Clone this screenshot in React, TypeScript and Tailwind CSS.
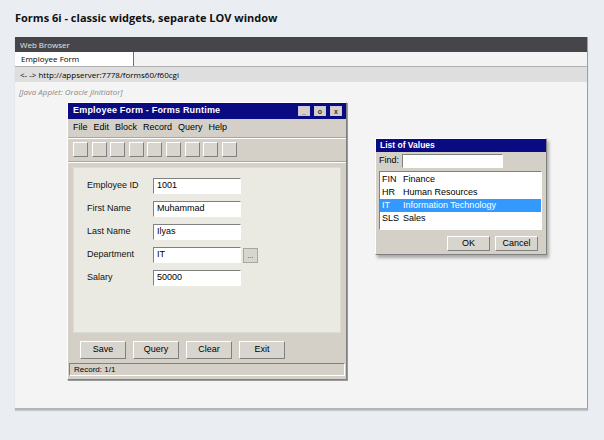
import React from "react";

const ui = { fontFamily: '"Liberation Sans", Arial, sans-serif' };
const seg = { fontFamily: '"Open Sans", "Noto Sans", sans-serif' };

const bevel =
  "border border-t-white border-l-white border-r-[#808080] border-b-[#808080]";
const inset =
  "border border-t-[#808080] border-l-[#808080] border-r-white border-b-white";

const fields = [
  { label: "Employee ID", value: "1001" },
  { label: "First Name", value: "Muhammad" },
  { label: "Last Name", value: "Ilyas" },
  { label: "Department", value: "IT", lov: true },
  { label: "Salary", value: "50000" },
];

const lovRows = [
  { code: "FIN", name: "Finance" },
  { code: "HR", name: "Human Resources" },
  { code: "IT", name: "Information Technology", selected: true },
  { code: "SLS", name: "Sales" },
];

function TitleButton({ glyph }: { glyph: string }) {
  return (
    <div className="w-[12px] h-[10px] bg-[#d4d0c8] border border-[#c8c8d8] flex items-center justify-center text-[7px] font-bold leading-none text-[#333]">
      {glyph}
    </div>
  );
}

function FormsWindow() {
  return (
    <div
      className={`w-[280px] bg-[#d4d0c8] ${bevel} shadow-[1px_1px_0_#9a9a9a] flex flex-col`}
      style={ui}
    >
      <div className="h-[16px] bg-[#0a0a82] flex items-center justify-between pl-[5px] pr-[4px]">
        <span className="text-white text-[9px] font-bold tracking-[0.2px]">
          Employee Form - Forms Runtime
        </span>
        <div className="flex gap-[4px]">
          <TitleButton glyph="_" />
          <TitleButton glyph="o" />
          <TitleButton glyph="x" />
        </div>
      </div>
      <div className="h-[18px] flex items-center gap-[6px] pl-[5px] text-[9px] text-black">
        <span>File</span>
        <span>Edit</span>
        <span>Block</span>
        <span>Record</span>
        <span>Query</span>
        <span>Help</span>
      </div>
      <div className="border-t border-t-[#a8a6a0] border-b border-b-white" />
      <div className="flex gap-[3.6px] pl-[5px] pt-[3px] pb-[4px]">
        {Array.from({ length: 9 }).map((_, i) => (
          <div key={i} className={`w-[15px] h-[15px] bg-[#d8d5ce] ${bevel}`} />
        ))}
      </div>
      <div className="border-t border-t-[#a8a6a0] border-b border-b-white" />
      <div className="mx-[5px] mt-[4px] h-[166px] bg-[#ebeae2] border border-[#dcdad2] pt-[10px] pl-[13px] flex flex-col gap-[7px]">
        {fields.map((f) => (
          <div key={f.label} className="flex items-center h-[16px]">
            <span className="w-[66px] text-[9px] text-[#111]">{f.label}</span>
            <div
              className={`w-[88px] h-[16px] bg-white ${inset} flex items-center pl-[3px] text-[9px] text-black`}
            >
              {f.value}
            </div>
            {f.lov && (
              <div className="ml-[2px] w-[15px] h-[15px] bg-[#d8d5ce] border border-[#a9a7a0] flex items-center justify-center text-[7px] leading-none text-[#333]">
                ...
              </div>
            )}
          </div>
        ))}
      </div>
      <div className="flex gap-[7px] pl-[12px] pt-[8px] pb-[4px]">
        {["Save", "Query", "Clear", "Exit"].map((b) => (
          <div
            key={b}
            className={`w-[46px] h-[18px] bg-[#d8d5ce] ${bevel} flex items-center justify-center text-[9px] text-black`}
          >
            {b}
          </div>
        ))}
      </div>
      <div
        className={`mx-[1px] mb-[3px] h-[13px] ${inset} flex items-center pl-[4px] text-[8px] text-black`}
      >
        Record: 1/1
      </div>
    </div>
  );
}

function LovWindow() {
  return (
    <div
      className={`mt-[36px] w-[172px] h-[117px] bg-[#d4d0c8] ${bevel} shadow-[2px_3px_3px_rgba(0,0,0,0.3)] flex flex-col`}
      style={ui}
    >
      <div className="h-[13px] bg-[#0a0a82] flex items-center pl-[4px]">
        <span className="text-white text-[8.5px] font-bold">List of Values</span>
      </div>
      <div className="flex items-center h-[17px] pl-[3px] gap-[3px]">
        <span className="text-[9px] text-black">Find:</span>
        <div className={`w-[101px] h-[14px] bg-white ${inset}`} />
      </div>
      <div
        className={`mt-[2px] ml-[3px] w-[163px] h-[59px] bg-white ${inset} pt-[1px] flex flex-col`}
      >
        {lovRows.map((r) => (
          <div
            key={r.code}
            className={`h-[13px] flex items-center pl-[2px] text-[9px] ${
              r.selected ? "bg-[#3399ff] text-white" : "text-black"
            }`}
          >
            <span className="w-[21px]">{r.code}</span>
            <span>{r.name}</span>
          </div>
        ))}
      </div>
      <div className="flex justify-end gap-[5px] pr-[8px] pt-[6px]">
        {["OK", "Cancel"].map((b) => (
          <div
            key={b}
            className={`w-[43px] h-[15px] bg-[#d8d5ce] ${bevel} flex items-center justify-center text-[9px] text-black`}
          >
            {b}
          </div>
        ))}
      </div>
    </div>
  );
}

export default function App() {
  return (
    <div className="w-[604px] h-[440px] bg-[#eaeef2] pt-[9px] pl-[15px]" style={seg}>
      <h1 className="text-[11px] font-bold text-[#111] leading-[18px]">
        Forms 6i - classic widgets, separate LOV window
      </h1>
      <div className="mt-[10px] w-[573px] bg-[#f4f4f4] border-r border-r-[#a0a0a0] border-b-2 border-b-[#b4b4b4] shadow-[0_1px_1px_rgba(0,0,0,0.15)]">
        <div className="h-[15px] bg-[#46464a] flex items-center pl-[5px] text-[8px] text-[#e4e4e4]">
          Web Browser
        </div>
        <div className="h-[15px] flex bg-[#f3f3f3] border-b border-b-[#b0b0b0]">
          <div className="w-[119px] bg-white border-r border-r-[#707070] flex items-center pl-[6px] text-[8px] text-black">
            Employee Form
          </div>
        </div>
        <div className="h-[15px] bg-[#dedede] flex items-center pl-[5px] text-[8px] text-black">
          {"<- ->"}&nbsp;http://appserver:7778/forms60/f60cgi
        </div>
        <div className="pl-[4px] pt-[4px] text-[8px] italic text-[#8a8a8a] leading-[12px]">
          [Java Applet: Oracle JInitiator]
        </div>
        <div className="flex pl-[52px] pt-[4px] pb-[28px]">
          <FormsWindow />
          <div className="ml-[28px]">
            <LovWindow />
          </div>
        </div>
      </div>
    </div>
  );
}
